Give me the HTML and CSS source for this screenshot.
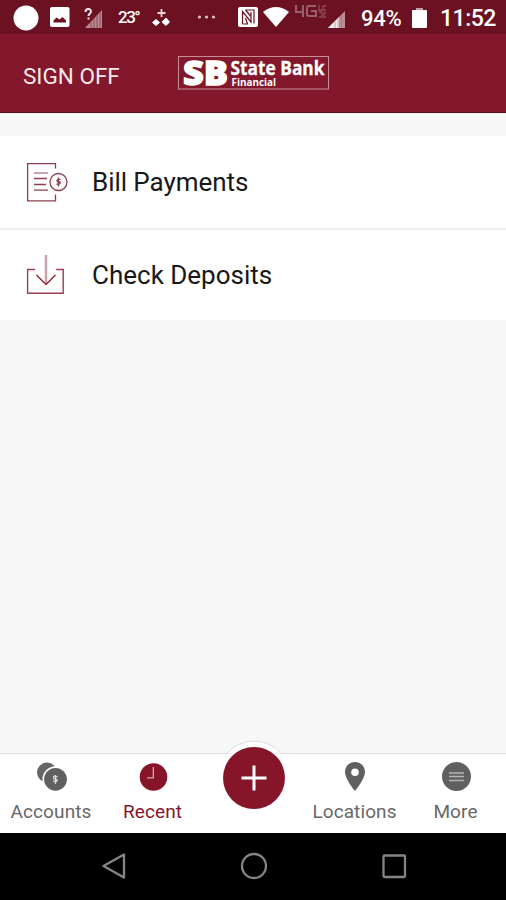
FILE: index.html
```html
<!DOCTYPE html>
<html lang="en">
<head>
    <meta charset="UTF-8">
    <title>State Bank Financial</title>
    <link rel="stylesheet" href="styles.css">
</head>
<body>
    <div class="status">
        <div class="notices">
            <svg class="dot" width="26" height="26" viewBox="0 0 26 26"><circle cx="13" cy="13" r="12.5" fill="#fff"/></svg>
            <svg class="photo" width="20" height="20" viewBox="0 0 20 20"><rect width="19.5" height="20" rx="2" fill="#fff"/><path d="M3.500 15.500v-2l3-3 3 2 3-2.500 3.500 3.500v2z" fill="#6b1122"/></svg>
            <svg class="nosignal" width="20" height="22" viewBox="0 0 20 22"><path d="M1 21L18 3v18z" fill="#b98a93"/><path d="M7 14v7M10 11v10M13 8v13M16 5v16" stroke="#8d4b59"/><path d="M1.500 5C1.500 1 7 1 7 4.500 7 6.500 4.500 6.500 4.500 9M4.500 10.500v2" fill="none" stroke="#f3e6e9" stroke-width="2"/></svg>
            <span class="temp">23°</span>
            <svg class="clover" width="18" height="18" viewBox="0 0 18 18"><path d="M9.500 0v8M5.500 4h8" stroke="#ead9dc" stroke-width="1.800"/><path d="M0.500 13.500l3.500-3 3.500 3-3.500 3zM10 13l4-4 3.500 4-3.500 3.500z" fill="#fff" stroke="#fff" stroke-linejoin="round"/></svg>
            <svg class="dots" width="20" height="4" viewBox="0 0 20 4"><circle cx="2.500" cy="2" r="1.600" fill="#dcc3c8"/><circle cx="9.500" cy="2" r="1.600" fill="#dcc3c8"/><circle cx="16.500" cy="2" r="1.600" fill="#dcc3c8"/></svg>
        </div>
        <div class="system">
            <svg class="nfc" width="20" height="20" viewBox="0 0 20 20"><rect width="20" height="20" rx="2" fill="#fff"/><path d="M4.500 17V4.500L13 15V5M7.500 3h8.500v13.500M7.500 3L13 9.500M4.500 17h5L7.500 11" fill="none" stroke="#6b1122" stroke-width="1.200"/></svg>
            <svg class="wifi" width="26" height="20" viewBox="0 0 26 20"><path d="M0 5Q13-5 26 5L13 20z" fill="#fff"/></svg>
            <svg class="lte" width="32" height="15" viewBox="0 0 32 15"><path d="M1 1v7h8M8 1v12M21 2h-7q-2 0-2 2v6q0 2 2 2h7V7h-5" fill="none" stroke="#98606b" stroke-width="2"/><path d="M24 1v5h3M31 2h-3v4h3M24 8h3v5h-3M31 9h-2v4h2" fill="none" stroke="#8c4c5a" stroke-width="1.300"/></svg>
            <svg class="signal" width="18" height="17" viewBox="0 0 18 17"><path d="M0 17L17 0v17z" fill="#b88d95"/><path d="M0 17L11 6v11z" fill="#f8eef0"/><path d="M7 10v7M10 7v10M13.500 4v13" stroke="#aa7580" stroke-width=".700"/></svg>
            <span class="percent">94%</span>
            <svg class="battery" width="15" height="20" viewBox="0 0 15 20"><path d="M4 0h7v2h3q1 0 1 1v16q0 1-1 1H1q-1 0-1-1V3q0-1 1-1h3z" fill="#fff"/><path d="M4 0h7v2H4z" fill="#c69da5"/></svg>
            <span class="time">11:52</span>
        </div>
    </div>

    <div class="header">
        <a class="signoff">SIGN OFF</a>
        <svg class="logo" width="152" height="34" viewBox="0 0 152 34">
            <rect x="1.500" y=".5" width="150" height="32.500" fill="none" stroke="#c78d97"/>
            <text class="sb" x="6" y="29" textLength="45" lengthAdjust="spacingAndGlyphs">SB</text>
            <text class="bank" x="53.500" y="19" textLength="94" lengthAdjust="spacingAndGlyphs">State Bank</text>
            <text class="fin" x="54.500" y="29.500" textLength="44.500" lengthAdjust="spacingAndGlyphs">Financial</text>
        </svg>
    </div>

    <div class="list">
        <div class="item">
            <svg class="icon" width="44" height="44" viewBox="0 0 44 44">
                <g fill="none" stroke="#8d4050" stroke-width="1.300">
                    <path d="M31.500 7.500V2.600H3.600v37.200h27.900v-6.300"/>
                    <path d="M10 17.500h13M10 23.500h12M10 29.200h14"/>
                    <circle cx="34.500" cy="21" r="8.500"/>
                    <path d="M36.500 18.500q-3.500-1-3.500 1t3 1.500q1 3-3.500 2M34.500 16.500v9"/>
                </g>
                <path d="M10 12h14" stroke="#c9a5ad" stroke-width="2"/>
            </svg>
            <span class="label bill">Bill Payments</span>
        </div>
        <div class="item">
            <svg class="icon" width="44" height="44" viewBox="0 0 44 44">
                <path d="M22 1v28" stroke="#c9a4ac" stroke-width="2.500"/>
                <path d="M11 15.500h-7.400v23.700h35.600V15.500h-7" fill="none" stroke="#9d3f50" stroke-width="1.400"/>
                <path d="M12.500 21l9.500 9.500 9.500-9.500" fill="none" stroke="#94283c" stroke-width="1.500"/>
            </svg>
            <span class="label check">Check Deposits</span>
        </div>
    </div>

    <div class="content"></div>

    <div class="nav">
        <a class="tab">
            <svg width="32" height="30" viewBox="0 0 32 30"><circle cx="12" cy="10.500" r="10" fill="#666"/><circle cx="20.500" cy="17.300" r="13" fill="#fff"/><circle cx="20.500" cy="17.300" r="11.400" fill="#606060"/><path d="M22.500 15q-4-2-4 .500t3.500 2q1 3-4 1.700M20.500 13v9" fill="none" stroke="#ddd" stroke-width="1.200"/></svg>
            <span class="accounts">Accounts</span>
        </a>
        <a class="tab active">
            <svg width="32" height="30" viewBox="0 0 32 30"><circle cx="16.500" cy="15" r="13.800" fill="#871529"/><path d="M16.300 5v10.800H10" fill="none" stroke="#d5a4ad" stroke-width="1.300"/></svg>
            <span class="recent">Recent</span>
        </a>
        <div class="middle">
            <svg class="plus" width="74" height="74" viewBox="0 0 74 74"><path d="M9.800 11.500a36 36 0 0 1 54.400 0z" fill="#fff"/><path d="M9.800 11.500a36 36 0 0 1 54.400 0" fill="none" stroke="#dedede"/><circle cx="37" cy="36" r="31" fill="#871529"/><path d="M24.500 36h25M37 23.500v25" stroke="#fff" stroke-width="3"/></svg>
        </div>
        <a class="tab">
            <svg width="32" height="30" viewBox="0 0 32 30"><path fill-rule="evenodd" d="M16 0C10.400 0 6 4.300 6 10c0 7 10 19 10 19s10-12 10-19c0-5.700-4.400-10-10-10zm0 6.500a3.800 3.800 0 1 1 0 7.600 3.800 3.800 0 0 1 0-7.600z" fill="#606060"/></svg>
            <span class="locations">Locations</span>
        </a>
        <a class="tab">
            <svg width="32" height="30" viewBox="0 0 32 30"><circle cx="16.500" cy="14.500" r="14.500" fill="#606060"/><path d="M9 11h15M9 14.500h15M9 18.500h15" stroke="#b5b5b5" stroke-width="1.300"/></svg>
            <span class="more">More</span>
        </a>
    </div>

    <div class="keys">
        <svg width="28" height="28" viewBox="0 0 28 28"><path d="M3.500 14L24 2.500v23z" fill="none" stroke="#858585" stroke-width="2.300" stroke-linejoin="round"/></svg>
        <svg width="28" height="28" viewBox="0 0 28 28"><circle cx="14" cy="14" r="12" fill="none" stroke="#858585" stroke-width="2.300"/></svg>
        <svg width="28" height="28" viewBox="0 0 28 28"><rect x="3.500" y="3.500" width="21.500" height="21.500" rx="1" fill="none" stroke="#858585" stroke-width="2.300"/></svg>
    </div>
</body>
</html>
```
FILE: styles.css
```css
* {
    margin: 0;
    padding: 0;
    box-sizing: border-box;
}
body{
    display:flex;
    flex-direction:column;
    height:900px;
    overflow:hidden;
    background:#f7f7f7;
    font-family:Roboto,"Liberation Sans",sans-serif;
}
svg{display:block;flex:none;overflow:visible;}

/* status bar */
.status{display:flex;justify-content:space-between;height:34px;padding:0 10px 0 13px;background:#6b1122;color:#fff;}
.notices,.system{display:flex;align-items:center;}
.dot{margin-top:1px;}
.photo{margin-left:11px;}
.nosignal{margin:1px 0 0 14px;}
.temp{width:19px;margin-left:14px;font-size:17px;font-weight:500;letter-spacing:-1.5px;}
.clover{margin:2px 0 0 15px;}
.dots{margin-left:27px;}
.wifi{margin-left:5px;}
.lte{margin:0 0 12px 6px;}
.signal{margin:5px 0 0 1px;}
.percent{width:42px;margin:2px 0 0 15px;font-size:22px;font-weight:500;letter-spacing:-.2px;}
.battery{margin:2px 0 0 9px;}
.time{width:56px;margin:2px 0 0 13px;font-size:23px;font-weight:500;letter-spacing:-.5px;}

/* header */
.header{display:flex;align-items:center;height:79px;padding:0 0 2px 23px;background:#83172b;border-bottom:1px solid #5d0b19;}
.signoff{width:154px;padding-top:7px;font-size:22.5px;letter-spacing:0;color:#f8e9ec;}
.logo{margin-top:2px;}
.logo text{fill:#fff;font-family:"Open Sans",sans-serif;font-weight:700;}
.logo .sb{font-size:34px;font-weight:800;stroke:#fff;stroke-width:1.4;}
.logo .bank{font-size:20px;stroke:#fff;stroke-width:.3;}
.logo .fin{font-size:10.5px;}

/* list */
.list{margin-top:23px;background:#fff;}
.item{display:flex;align-items:center;height:92px;padding-left:24px;}
.item + .item{border-top:2px solid #eee;}
.icon{margin-top:1px;}
.item + .item .icon{margin-top:2px;}
.label{margin-left:24px;font-size:26px;color:#181818;}
.bill{letter-spacing:-.05px;}
.check{letter-spacing:0;}
.content{flex:1;}

/* bottom tabs */
.nav{display:grid;grid-template-columns:102px 101px 101px 101px 101px;height:80px;background:#fff;border-top:1px solid #dcdcdc;}
.tab{display:flex;flex-direction:column;align-items:center;padding-top:8px;color:#686868;}
.tab span{margin-top:7px;font-size:19px;line-height:26px;letter-spacing:.1px;}
.active{color:#871529;}
.middle{position:relative;}
.plus{position:absolute;top:-12px;left:14px;}

/* android keys */
.keys{display:flex;justify-content:center;gap:112px;height:67px;padding:19px 0 0 1px;background:#000;}
```
